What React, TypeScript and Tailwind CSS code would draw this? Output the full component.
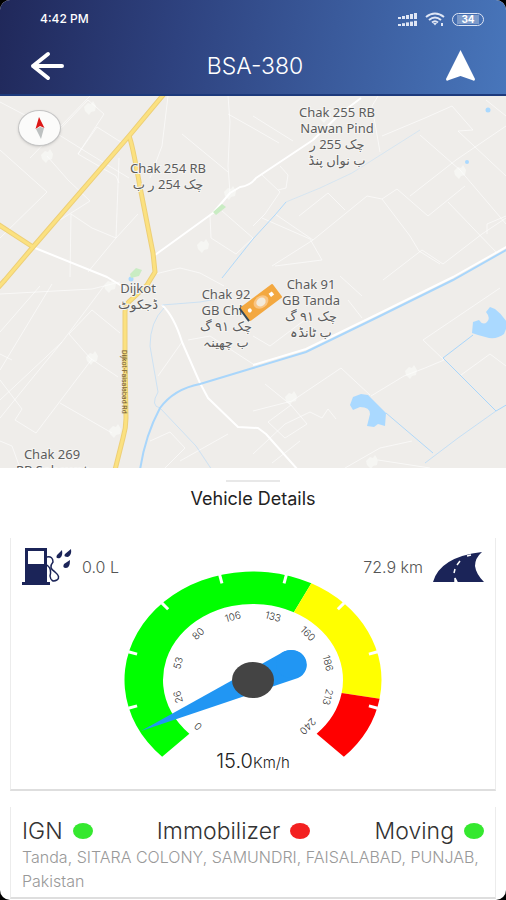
import type { ReactNode } from "react";

const CX = 140;
const CY = 116;

// The dial is wider than it is tall, so every radius has an x and a y part.
function polar(deg: number, rx: number, ry: number) {
  const a = (deg * Math.PI) / 180;
  return [CX + rx * Math.cos(a), CY + ry * Math.sin(a)];
}

function band(from: number, to: number) {
  const [x1, y1] = polar(from, 128.5, 108.5);
  const [x2, y2] = polar(to, 128.5, 108.5);
  const [x3, y3] = polar(to, 90, 76);
  const [x4, y4] = polar(from, 90, 76);
  const large = to - from > 180 ? 1 : 0;
  return `M${x1} ${y1}A128.5 108.5 0 ${large} 1 ${x2} ${y2}L${x3} ${y3}A90 76 0 ${large} 0 ${x4} ${y4}Z`;
}

const marks = [0, 26, 53, 80, 106, 133, 160, 186, 213, 240];

function Gauge() {
  return (
    <svg viewBox="0 0 280 196" className="h-[196px] w-[280px]" role="img" aria-label="Speed">
      <path d={band(135, 297)} fill="#00ff00" />
      <path d={band(297, 369.9)} fill="#ffff00" />
      <path d={band(369.9, 405)} fill="#ff0000" />
      {marks.slice(1, -1).map((m, i) => {
        const deg = 165 + i * 30;
        const [x1, y1] = polar(deg, 129, 109);
        const [x2, y2] = polar(deg, 120, 100);
        return <line key={m} x1={x1} y1={y1} x2={x2} y2={y2} stroke="#fff" strokeWidth="3" />;
      })}
      {marks.map((m, i) => {
        const deg = 135 + i * 30;
        const [x, y] = polar(deg, 78, 66);
        return (
          <text
            key={m}
            x={x}
            y={y}
            transform={`rotate(${deg + 90} ${x} ${y})`}
            textAnchor="middle"
            dominantBaseline="central"
            className="font-['Inter'] text-[10px] font-light"
            fill="#333"
          >
            {m}
          </text>
        );
      })}
      <path d="M28 167L171 87.500A15 14 0 0 1 185 114Z" fill="#2196f3" />
      <ellipse cx="178" cy="100" rx="15" ry="14" fill="#2196f3" />
      <ellipse cx={CX} cy={CY} rx="21" ry="18" fill="#444" />
    </svg>
  );
}

const majorRoads = [
  "M164 -2L129 40L33 151L5 184L-4 194",
  "M-4 127L33 151",
  "M129 40Q132 46 140 91L153 157L155 176L147 189L132 203Q125 208 125 216L125 256L126 322Q126 332 123 342L115 374",
];

const roads = [
  "M35 152L107 181L125 192",
  "M155 159L213 117L230 97L240 91Q250 90 256 82L313 44L340 18L361 2",
  "M162 209Q174 220 182 246L200 287L208 302L238 331L258 332L266 338L298 374",
  "M253 269L306 253L378 218L453 181L508 150",
];

const lanes = [
  "M0 6L40 27L88 57L129 82",
  "M30 62L90 0",
  "M48 46L88 4L104 18L78 58L116 80L119 87",
  "M78 58L97 31L124 48",
  "M0 54L47 96L0 142",
  "M47 60L68 84L90 105L60 124",
  "M119 62L116 142L92 132L71 118",
  "M71 118L70 181",
  "M168 0L162 50L150 82",
  "M138 118L116 142L88 176",
  "M228 0L230 26L228 70L230 97",
  "M228 18L253 32L279 47",
  "M182 38L228 76",
  "M210 120L211 142L236 158L253 142",
  "M222 115L253 142",
  "M155 178L180 172L200 177L224 190",
  "M0 198L92 193L120 186",
  "M0 236L40 190",
  "M0 274L52 188",
  "M0 304L62 246L104 190",
  "M62 246L30 285L0 322",
  "M69 238L92 214L120 237",
  "M69 238L90 262L118 281",
  "M0 258L12 264",
  "M0 284L22 313L15 324L36 337L92 263",
  "M60 307L112 337",
  "M0 345L12 350L20 372",
  "M158 280L182 246",
  "M150 345L170 336L185 352L165 372",
  "M180 365L228 338",
  "M188 244L210 240L253 268",
  "M253 20L293 45",
  "M261 78L280 96L265 118L253 130",
  "M280 70L288 79L286 92L278 94",
  "M299 120L328 97L345 114",
  "M275 118L313 144",
  "M262 122L310 143L322 164L275 170",
  "M272 170L313 144L367 100L382 103L397 93L428 120L465 90",
  "M382 103L410 140L419 155L440 168",
  "M378 0L372 10L380 56",
  "M382 40L425 22L452 10L473 34L458 35L506 80",
  "M410 100L456 64L506 30",
  "M420 39L460 74L506 128",
  "M448 106L496 156",
  "M383 184L422 154L443 168L482 138L506 122",
  "M340 180L362 200",
  "M487 138L487 128L506 120",
  "M423 244L500 192",
  "M423 244L444 264L425 272L404 280L371 300",
  "M253 315L292 305L341 272L370 299",
  "M265 288L291 309L268 326L285 342L307 328L291 309",
  "M253 358L285 328L310 316L322 322L328 313L336 323",
  "M461 279L490 258L506 270",
  "M272 367L300 345",
  "M345 372L380 352L412 345",
  "M378 364L430 372",
  "M253 240L270 250L310 220",
  "M348 204L362 222",
  "M486 4L506 20",
];

const streams = [
  { d: "M140 374Q145 340 160 312Q174 293 200 288L253 272L306 256L378 221L453 184L508 153", w: 2, o: 1 },
  { d: "M222 182L253 143L275 119L286 106", w: 1, o: 0.9 },
  { d: "M286 106L320 92L352 77L420 34", w: 1, o: 0.35 },
  { d: "M164 212Q150 226 150 250L158 296Q150 310 160 312L196 350L212 374", w: 1, o: 0.5 },
  { d: "M162 209L200 206L222 202", w: 1, o: 0.5 },
  { d: "M386 317L433 357", w: 1, o: 0.9 },
  { d: "M425 367L458 342L496 315", w: 1, o: 0.6 },
  { d: "M473 239L443 262L496 315L508 308", w: 1, o: 1 },
];

const hamlets = [
  [90, 12], [47, 60], [230, 97], [203, 150], [92, 262], [115, 335], [325, 20], [460, 76],
  [291, 302], [372, 366], [411, 276], [110, 190],
];

interface Place {
  x: number;
  y: number;
  lines: string[];
}

const places: Place[] = [
  { x: 337, y: 21, lines: ["Chak 255 RB", "Nawan Pind", "چک 255 ر", "ب نواں پنڈ"] },
  { x: 168, y: 77, lines: ["Chak 254 RB", "چک 254 ر ب"] },
  { x: 138, y: 197, lines: ["Dijkot", "ڈجکوٹ"] },
  { x: 226, y: 203, lines: ["Chak 92", "GB Chhi", "چک ۹۱ گ", "ب چھینہ"] },
  { x: 311, y: 193, lines: ["Chak 91", "GB Tanda", "چک ۹۱ گ", "ب ٹانڈہ"] },
  { x: 52, y: 363, lines: ["Chak 269", "RB Sohewat"] },
];

function MapView() {
  return (
    <div className="relative h-[372px] overflow-hidden bg-[#efedea]">
      <svg
        viewBox="0 0 506 372"
        preserveAspectRatio="xMidYMid slice"
        className="block h-full w-full"
        role="img"
        aria-label="Map"
      >
        <g fill="#f6f6f3">
          {hamlets.map(([x, y]) => (
            <path key={`${x}-${y}`} d={`M${x - 6} ${y - 1}l4 -4l3 1l2 -3l3 5l-1 5l-4 1l-2 3l-4 -4z`} />
          ))}
        </g>
        <g fill="none" stroke="#fff" strokeOpacity="0.6" strokeWidth="1">
          {lanes.map((d) => (
            <path key={d} d={d} />
          ))}
        </g>
        <g fill="none" stroke="#fff" strokeWidth="2" strokeLinejoin="round">
          {roads.map((d) => (
            <path key={d} d={d} />
          ))}
        </g>
        <g fill="none" stroke="#a9d6fb">
          {streams.map((s) => (
            <path key={s.d} d={s.d} strokeWidth={s.w} strokeOpacity={s.o} />
          ))}
        </g>
        <g fill="#aad9ff">
          <path d="M350 309L353 301L361 298L368 299L386 317L385 330L378 328L374 331L367 330L370 318Q370 311 360 311L353 314Z" />
          <path d="M472 237L473 226L479 224Q483 230 487 226Q491 222 486 216L490 211L495 213Q503 219 508 228L504 238Q498 243 489 242L478 239Z" />
          <circle cx="488" cy="14" r="2.500" />
          <circle cx="467" cy="66" r="2" />
          <circle cx="131" cy="183" r="2.500" />
        </g>
        <g fill="#c9ecc3">
          <path d="M213 116L222 108L226 111L216 119Z" />
          <path d="M130 178L136 172L142 174L139 180L131 182Z" />
        </g>
        <g fill="none" strokeLinejoin="round">
          {majorRoads.map((d) => (
            <path key={d} d={d} stroke="#edcf77" strokeWidth="5" />
          ))}
          {majorRoads.map((d) => (
            <path key={d} d={d} stroke="#fbe180" strokeWidth="3" />
          ))}
        </g>
        <text
          transform="translate(122 254) rotate(90)"
          className="font-['Roboto'] text-[7px]"
          fill="#6b5632"
        >
          Dijkot-Faisalabad Rd
        </text>
        <g
          textAnchor="middle"
          className="font-['Noto_Sans','DejaVu_Sans',sans-serif] text-[13px]"
          fill="#5c5c5c"
          stroke="#f5f4f2"
          strokeWidth="2"
          paintOrder="stroke"
        >
          {places.map((p) =>
            p.lines.map((line, i) => (
              <text key={line + p.x} x={p.x} y={p.y + i * 16}>
                {line}
              </text>
            )),
          )}
        </g>
        <g transform="translate(261 206) rotate(-37)">
          <rect x="-22" y="-8" width="5" height="16" fill="#34495a" />
          <rect x="-20" y="-8" width="40" height="17" rx="1" fill="#f3a840" />
          <ellipse cx="0" cy="0" rx="8" ry="6" fill="#f9c583" />
          <ellipse cx="0" cy="0" rx="5" ry="4" fill="#f3ead9" />
          <circle cx="-14" cy="0" r="2" fill="#fff" />
          <rect x="11" y="-2" width="4" height="4" fill="#fff" />
        </g>
      </svg>
      <button
        type="button"
        aria-label="Compass"
        className="absolute top-[14px] left-[18px] flex h-9 w-[43px] items-center justify-center rounded-[50%] border border-[#c4c4c4] bg-[#fbfbfa] shadow-sm"
      >
        <svg viewBox="0 0 12 24" className="h-6 w-3">
          <path d="M5 1L10.500 12L6 10L1.500 13Z" fill="#dd1717" />
          <path d="M2 13L6 11L10 12L7 23Z" fill="#bdc1c1" />
        </svg>
      </button>
    </div>
  );
}

function StatusBar() {
  return (
    <div className="flex h-9 items-center justify-between pt-[2px] pr-[22px] pl-10 text-white">
      <span className="text-[12px] font-medium">4:42 PM</span>
      <div className="flex items-center gap-[7px]">
        <svg viewBox="0 0 20 13" className="h-[13px] w-5" fill="#dfe6f5">
          {[0, 4, 8, 12, 16].map((x, i) => (
            <g key={x}>
              <rect x={x} y={4 - i} width="3" height={2 + i} />
              <rect x={x} y={11 - i * 0.8} width="3" height={2 + i * 0.8} />
            </g>
          ))}
        </svg>
        <svg viewBox="0 0 20 14" className="h-[14px] w-5" fill="none" stroke="#dfe6f5" strokeWidth="2">
          <path d="M1 5Q10 -2 19 5M4 8Q10 3 16 8M7 10.500Q10 8 13 10.500" />
          <path d="M8 11H12L10 13.500Z" fill="#dfe6f5" stroke="none" />
          <path d="M17 11V14" />
        </svg>
        <span className="flex h-[13px] w-8 items-center justify-center rounded-full border border-[#dfe6f5] text-[10px] font-bold">
          <span className="bg-white/30 px-1 leading-[9px]">34</span>
        </span>
      </div>
    </div>
  );
}

function Header() {
  return (
    <header className="border-b-2 border-[#1d3a7c] bg-linear-[100deg,#20285a,#2e427f_35%,#3a5a9b_65%,#4876bb]">
      <StatusBar />
      <div className="flex h-[58px] items-center justify-between px-[30px] pt-[2px] text-white">
        <button type="button" aria-label="Back" className="w-[35px]">
          <svg viewBox="0 0 35 30" className="h-[30px] w-[35px]" fill="none" stroke="#fff" strokeWidth="4" strokeLinecap="round" strokeLinejoin="round">
            <path d="M18 3L3 15L18 27M3 15H32" />
          </svg>
        </button>
        <h1 className="text-[23px] font-light">BSA-380</h1>
        <button type="button" aria-label="Navigate" className="w-[31px]">
          <svg viewBox="0 0 31 32" className="h-8 w-[31px]" fill="#fff">
            <path d="M15.500 0L30 29Q30 32 27 30L15.500 26L4 30Q1 32 1 29Z" />
          </svg>
        </button>
      </div>
    </header>
  );
}

function Card({ children }: { children: ReactNode }) {
  return (
    <section className="border-x border-b-2 border-x-[#ececec] border-b-[#dedede] bg-white px-[11px]">
      {children}
    </section>
  );
}

function FuelIcon() {
  return (
    <svg viewBox="0 0 50 38" className="h-[38px] w-[50px]" fill="#1b2458">
      <path fillRule="evenodd" d="M3 0H25V34H28V37H0V34H3ZM6 3V16H22V3Z" />
      <path d="M25 9Q31 8 31 14Q26 20 33 24Q39 29 35 32Q29 35 28 28Q30 21 25 17" fill="none" stroke="#1b2458" strokeWidth="1.500" />
      <path d="M40 2Q41 8 38 10Q33 11 35 7ZM49 1Q50 7 46 9Q41 9 43 6ZM48 12Q48 20 44 20Q40 20 42 16Z" />
    </svg>
  );
}

function RoadIcon() {
  return (
    <svg viewBox="0 0 51 31" className="h-[31px] w-[51px]">
      <path d="M0 30Q7 5 49 0Q42 6 42 14Q43 22 51 30Z" fill="#1b2458" />
      <path d="M22 30L24 30L22 26ZM21 21L22 17M24 13L27 9M34 4L38 3" stroke="#fff" strokeWidth="1.500" fill="#fff" />
    </svg>
  );
}

const states = [
  { name: "IGN", on: true },
  { name: "Immobilizer", on: false },
  { name: "Moving", on: true },
];

export default function App() {
  return (
    <div className="min-h-screen bg-black font-['Inter',sans-serif]">
      <main className="flex min-h-screen flex-col overflow-hidden rounded-[10px] bg-white">
        <Header />
        <MapView />
        <div className="px-[10px]">
          <div className="mx-auto mt-[3px] h-[11px] w-[54px] border-b-2 border-[#e8e8e8]" />
          <h2 className="mt-[5px] mb-[27px] text-center text-[18px] leading-6 text-[#222]">Vehicle Details</h2>
          <Card>
            <div className="flex h-[58px] items-center justify-between text-[16px] font-light text-[#555]">
              <div className="flex items-center gap-[10px]">
                <FuelIcon />
                <span>0.0 L</span>
              </div>
              <div className="flex items-center gap-[10px]">
                <span>72.9 km</span>
                <RoadIcon />
              </div>
            </div>
            <div className="-mt-8 flex justify-center">
              <Gauge />
            </div>
            <p className="-mt-[11px] pb-[14px] text-center text-[20px] leading-6 font-light text-[#222]">
              15.0<span className="text-[15px]">Km/h</span>
            </p>
          </Card>
          <div className="mt-4">
            <Card>
              <ul className="flex justify-between pt-[10px] text-[23px] leading-7 font-light text-[#333]">
                {states.map((s) => (
                  <li key={s.name} className="flex items-center gap-[10px]">
                    {s.name}
                    <span className={s.on ? "h-4 w-5 rounded-[50%] bg-[#35e82f]" : "h-4 w-5 rounded-[50%] bg-[#f32020]"} />
                  </li>
                ))}
              </ul>
              <p className="pb-1 text-[16px] leading-6 font-light text-[#999]">
                Tanda, SITARA COLONY, SAMUNDRI, FAISALABAD, PUNJAB, Pakistan
              </p>
            </Card>
          </div>
        </div>
      </main>
    </div>
  );
}
